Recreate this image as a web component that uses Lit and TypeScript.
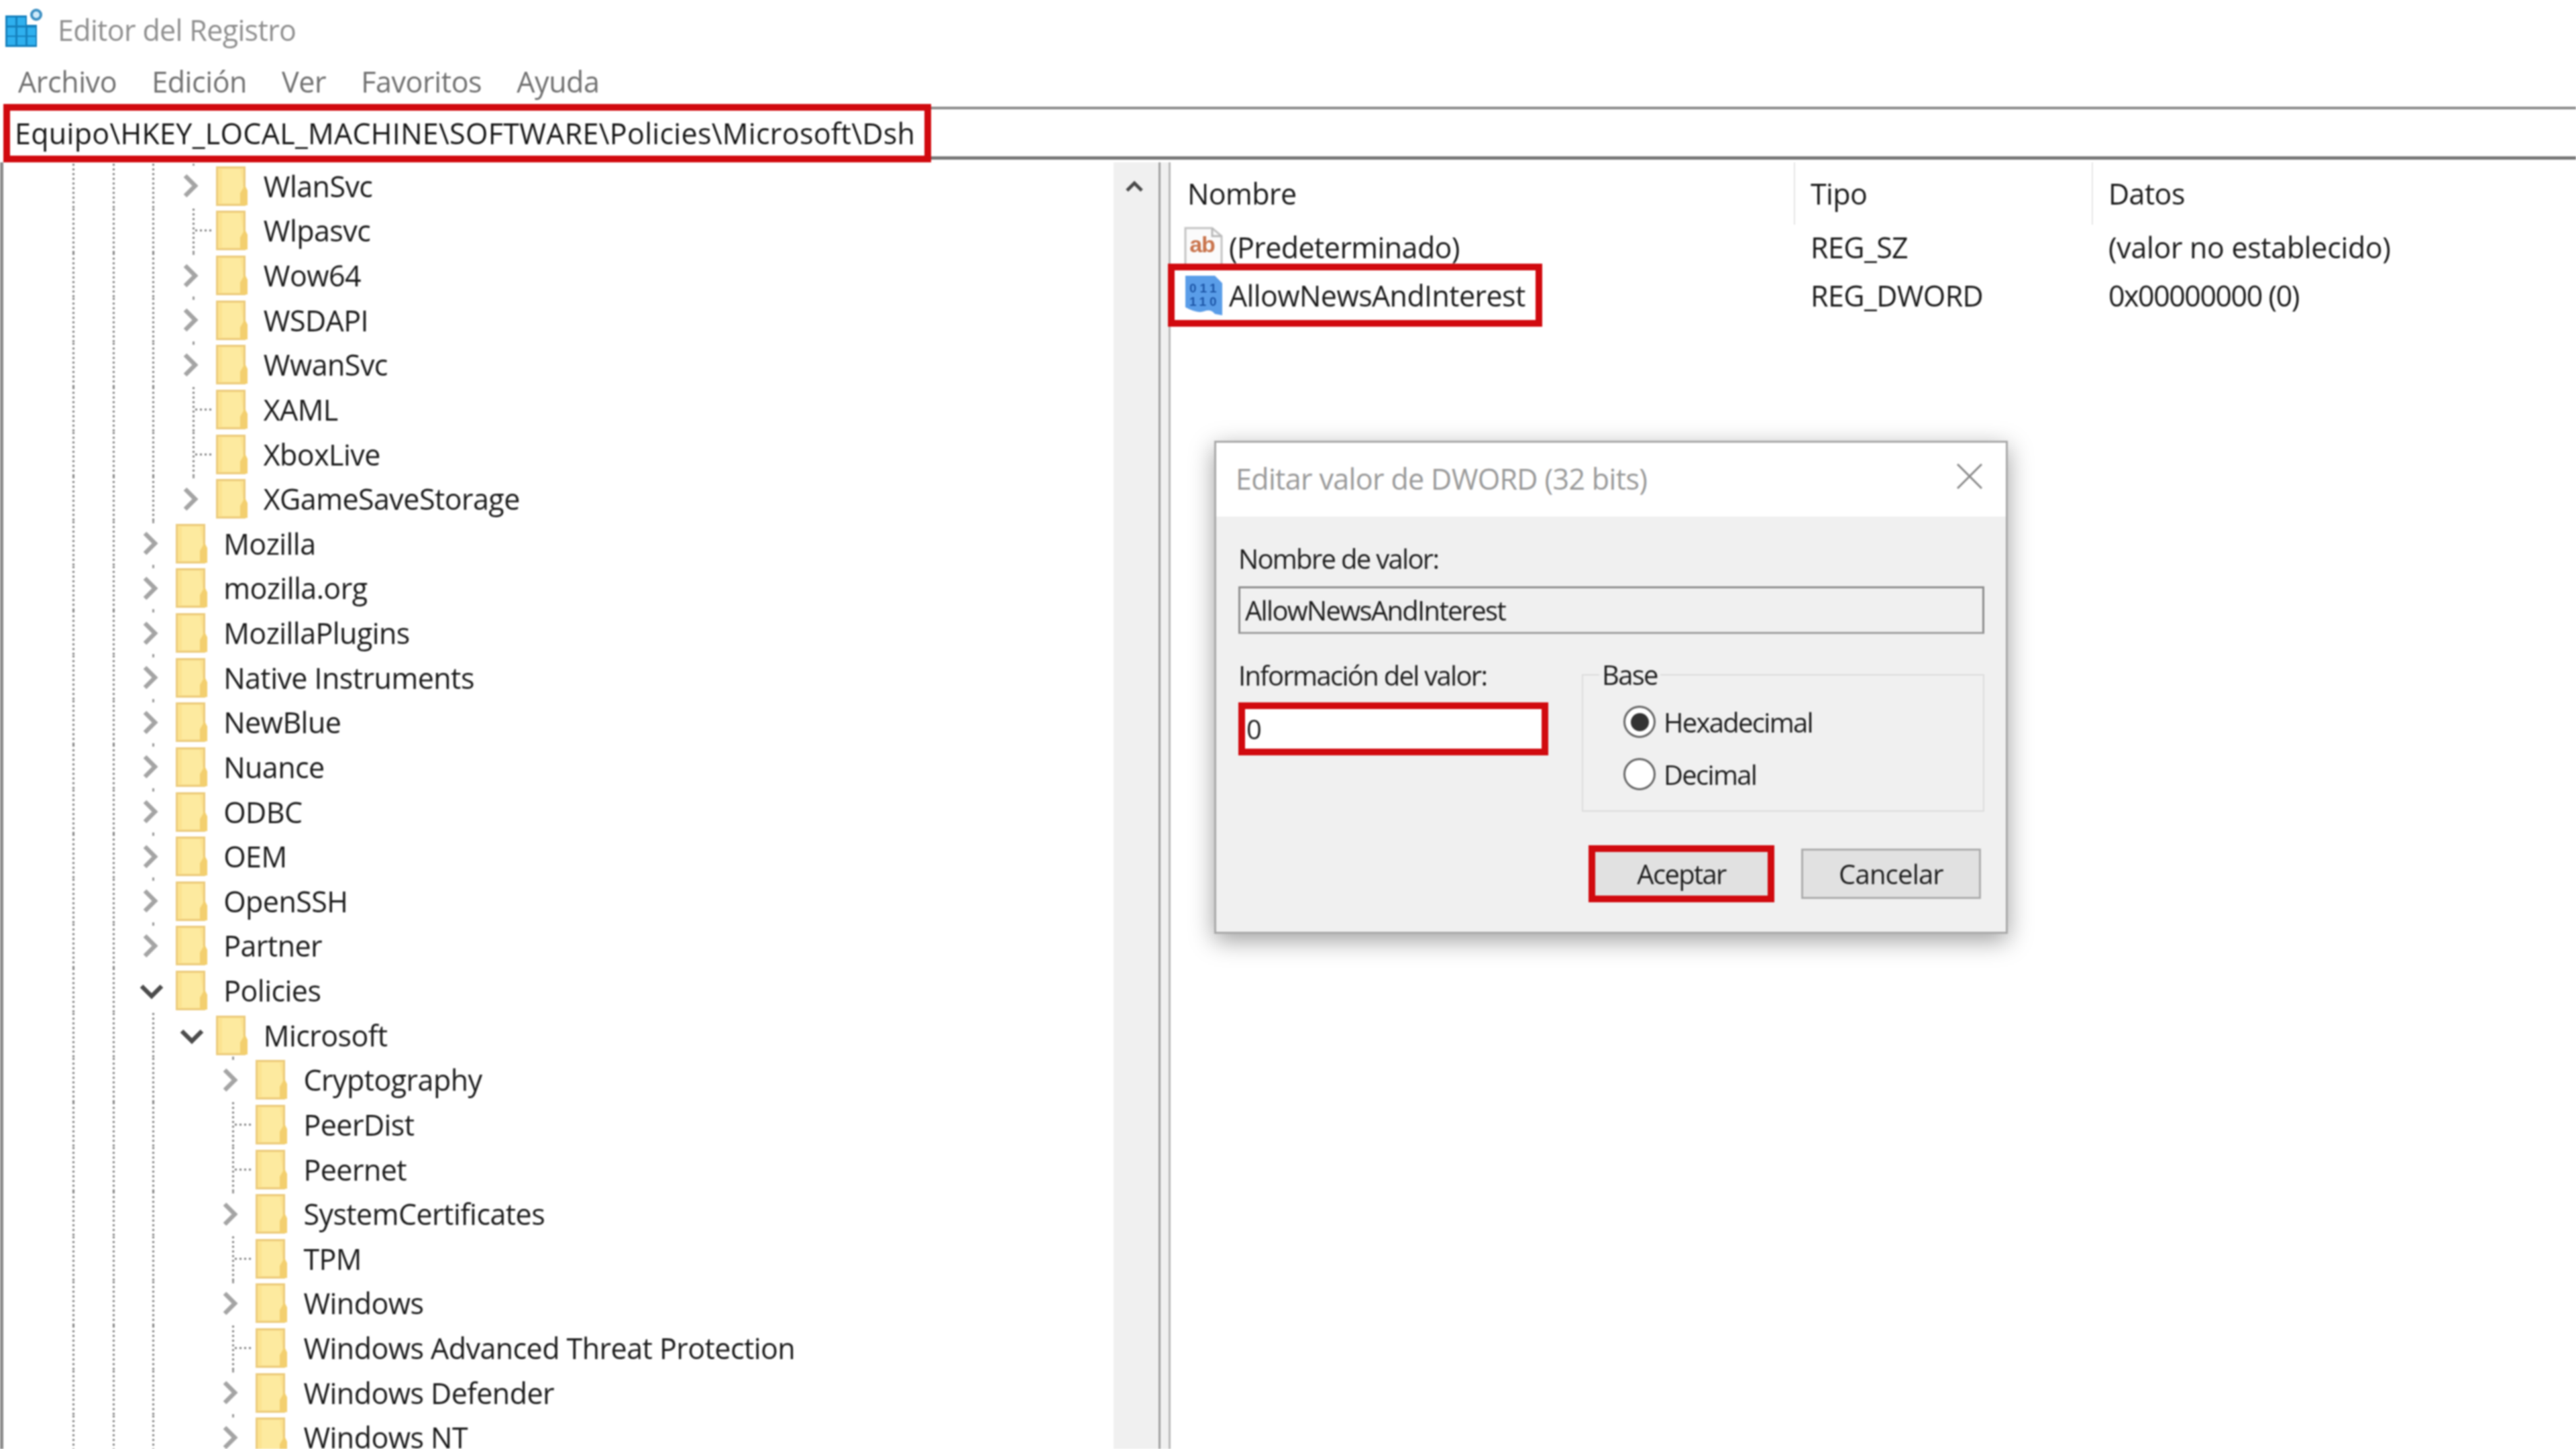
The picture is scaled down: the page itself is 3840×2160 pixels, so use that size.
import { LitElement, html, css, svg } from "lit";
import { customElement } from "lit/decorators.js";

type Row = { name: string; guides: number[]; kind: "closed" | "open" | "leaf" };

const L3 = [1, 1, 1];
const L2 = [1, 1];
const L4 = [1, 1, 1, 0];
const rows: Row[] = [
  ...[["WlanSvc", "closed"], ["Wlpasvc", "leaf"], ["Wow64", "closed"], ["WSDAPI", "closed"], ["WwanSvc", "closed"], ["XAML", "leaf"], ["XboxLive", "leaf"], ["XGameSaveStorage", "closed"]].map(([name, kind]) => ({ name, kind, guides: L3 } as Row)),
  ...["Mozilla", "mozilla.org", "MozillaPlugins", "Native Instruments", "NewBlue", "Nuance", "ODBC", "OEM", "OpenSSH", "Partner"].map((name) => ({ name, kind: "closed", guides: L2 } as Row)),
  { name: "Policies", kind: "open", guides: L2 },
  { name: "Microsoft", kind: "open", guides: L3 },
  ...[["Cryptography", "closed"], ["PeerDist", "leaf"], ["Peernet", "leaf"], ["SystemCertificates", "closed"], ["TPM", "leaf"], ["Windows", "closed"], ["Windows Advanced Threat Protection", "leaf"], ["Windows Defender", "closed"], ["Windows NT", "closed"]].map(([name, kind]) => ({ name, kind, guides: L4 } as Row)),
];

const folder = html`<svg class="folder" viewBox="0 0 48 59" aria-hidden="true">
  <rect x="1.5" y="1.5" width="41" height="56" fill="#fce391" stroke="#eccb7c" stroke-width="3"/>
  <path d="M9 4 L36 4 L41 34 L41 55 L9 55 Z" fill="#fdea9f"/>
  <path d="M36 40 L43 28 L47 36 L47 58 L36 58 Z" fill="#f3cf6f"/>
</svg>`;

const chevClosed = html`<svg class="chev" viewBox="0 0 24 36" aria-hidden="true"><path d="M4 3 L19 18 L4 33" fill="none" stroke="#a4a4a4" stroke-width="6.5"/></svg>`;
const chevOpen = html`<svg class="chev open" viewBox="0 0 36 24" aria-hidden="true"><path d="M3 4 L18 19 L33 4" fill="none" stroke="#4c4c4c" stroke-width="6.5"/></svg>`;

const regIcon = html`<svg class="appicon" viewBox="0 0 56 60" aria-hidden="true">
  <path d="M0 12 H32 V26 H47 V59 H0 Z" fill="#1580bd"/>
  ${[[3, 15], [18, 15], [3, 30], [18, 30], [33, 30], [3, 44], [18, 44], [33, 44]].map(([x, y]) => svg`<rect x=${x} y=${y} width="12" height="12" fill="#2fb0ee"/>`)}
  <circle cx="46" cy="11" r="7" fill="#cfeafa" stroke="#3a8ec2" stroke-width="4"/>
</svg>`;

const abIcon = html`<svg class="valicon" viewBox="0 0 58 60" aria-hidden="true">
  <path d="M2 2 H42 L56 14 V58 H2 Z" fill="#fbfbfb" stroke="#c4c4c4" stroke-width="3"/>
  <path d="M42 2 V14 H56" fill="none" stroke="#b8b8b8" stroke-width="3"/>
  <text x="27" y="38" text-anchor="middle" class="abt">ab</text>
</svg>`;
const dwIcon = html`<svg class="valicon" viewBox="0 0 58 60" aria-hidden="true">
  <path d="M2 1 H46 L57 12 V60 L46 58 Q40 50 30 54 T2 48 Z" fill="#5a9de8"/>
  <text x="8" y="26" textLength="40" class="dwt">011</text>
  <text x="8" y="46" textLength="40" class="dwt">110</text>
</svg>`;

@customElement("app-root")
export class AppRoot extends LitElement {
  static styles = css`
    :host { display: block; width: 3840px; height: 2160px; overflow: hidden; background: #fff; position: relative; font-family: "Open Sans", "Noto Sans", sans-serif; color: #222; }
    .win { width: 3840px; height: 2160px; display: flex; flex-direction: column; filter: blur(1.1px); position: relative; }
    .title { height: 88px; display: flex; align-items: center; padding-left: 8px; gap: 22px; color: #8f8f8f; font-size: 43px; letter-spacing: -0.65px; flex: none; }
    .appicon { width: 56px; height: 60px; margin-top: -6px; }
    .menu { height: 66px; display: flex; align-items: center; padding-left: 27px; gap: 52px; color: #707070; font-size: 43px; letter-spacing: -0.4px; flex: none; }
    .addr { height: 87px; display: flex; flex: none; padding-left: 5px; margin-top: 1px; }
    .path { width: 1383px; box-sizing: border-box; border: 10px solid #d10a0f; display: flex; align-items: center; padding-left: 7px; font-size: 43px; letter-spacing: 0.3px; white-space: nowrap; color: #151515; }
    .rest { flex: 1; margin-top: 4px; margin-bottom: 4px; border-top: 4px solid #8d8d8d; border-bottom: 5px solid #777; }
    .panes { flex: 1; min-height: 0; display: flex; border-left: 5px solid #8c8c8c; box-sizing: border-box; }
    .tree { width: 1655px; flex: none; overflow: hidden; padding-left: 103px; box-sizing: border-box; margin-top: 2px; }
    .row { height: 66.63px; display: flex; align-items: center; font-size: 43px; letter-spacing: -0.55px; white-space: nowrap; color: #1a1a1a; }
    .g { width: 59.6px; height: 100%; flex: none; }
    .g.on, .node.leaf { background: repeating-linear-gradient(#868686 0 3px, transparent 3px 7px) left top / 3px 100% no-repeat; }
    .node { width: 35px; height: 100%; flex: none; display: flex; align-items: center; position: relative; }
    .node.leaf::after { content: ""; width: 24px; height: 3px; margin-left: 4px; background: repeating-linear-gradient(90deg, #868686 0 3px, transparent 3px 7px); }
    .node.closed::before { content: ""; position: absolute; left: 0; top: -2px; width: 3px; height: 5px; background: #9a9a9a; }
    .chev { width: 24px; height: 36px; margin-left: -15px; flex: none; }
    .chev.open { width: 36px; height: 24px; margin-left: -19px; margin-top: 3px; }
    .folder { width: 48px; height: 59px; flex: none; }
    .label { margin-left: 23px; }
    .scroll { width: 67px; flex: none; background: #f0f0f0; display: flex; justify-content: center; padding: 26px 6px 0 0; box-sizing: border-box; }
    .scroll svg { width: 28px; height: 20px; }
    .split { width: 18px; flex: none; box-sizing: border-box; background: #f0f0f0; border-left: 3px solid #a0a0a0; border-right: 3px solid #b8b8b8; }
    .list { flex: 1; min-width: 0; font-size: 43px; letter-spacing: -0.6px; color: #1a1a1a; }
    .lh, .lr { display: grid; grid-template-columns: 929px 444px 1fr; }
    .lh { height: 90px; }
    .lh > div { display: flex; align-items: center; padding-left: 25px; margin-bottom: -3px; }
    .lh > div + div { border-left: 2px solid #e6e6e6; box-sizing: border-box; padding-left: 23px; }
    .lr { height: 72px; align-items: center; }
    .lr > div + div { padding-left: 25px; }
    .lr > .hexv { letter-spacing: -1.5px; }
    .lr > .wide { letter-spacing: -0.35px; }
    .nm { display: flex; align-items: center; padding-left: 20px; gap: 9px; }
    .valicon { width: 58px; height: 60px; flex: none; }
    .abt { font: 700 34px "Liberation Sans", sans-serif; fill: #c9744c; letter-spacing: -1px; }
    .dwt { font: 700 19px "Liberation Sans", sans-serif; fill: #1e57a8; }
    .hl { position: relative; display: flex; align-items: center; gap: 9px; }
    .hl::after { content: ""; position: absolute; left: -24px; right: -25px; top: -17px; bottom: -17px; border: 10px solid #d10a0f; box-sizing: border-box; }
    .dialog { position: absolute; left: 1810px; top: 657px; width: 1183px; height: 735px; box-sizing: border-box; background: #f0f0f0; border: 3px solid #a9a9a9; box-shadow: 0 10px 34px rgba(0, 0, 0, 0.38); display: flex; flex-direction: column; font-size: 40px; letter-spacing: -1.7px; color: #1d1d1d; }
    .dt { height: 110px; flex: none; background: #fff; display: flex; align-items: center; justify-content: space-between; padding: 0 34px 0 29px; color: #9a9a9a; font-size: 43px; letter-spacing: -0.65px; }
    .dt span { margin-top: -4px; }
    .dt svg { width: 40px; height: 40px; margin-top: -10px; }
    .db { padding: 37px 34px 0 33px; display: flex; flex-direction: column; }
    .lbl { height: 50px; display: flex; align-items: center; }
    .ipt { margin-top: 17px; height: 71px; box-sizing: border-box; border: 3px solid #8e8e8e; border-bottom-color: #a0a0a0; display: flex; align-items: center; padding-left: 7px; background: #f0f0f0; margin-right: -2px; }
    .cols { margin-top: 36px; display: grid; grid-template-columns: 462px 1fr; column-gap: 50px; align-items: start; }
    .ipt2 { margin-top: 16px; height: 79px; box-sizing: border-box; border: 10px solid #d10a0f; background: #fff; display: flex; align-items: center; padding-left: 2px; }
    fieldset { margin: 0 -2px 0 0; border: 2px solid #dcdcdc; padding: 6px 0 0 60px; height: 229px; box-sizing: border-box; min-width: 0; }
    legend { margin-left: -36px; padding: 0 4px; height: 50px; line-height: 50px; }
    .radio { height: 78px; display: flex; align-items: center; gap: 13px; }
    .radio span:last-child { margin-left: -1px; }
    .dot { width: 48px; height: 48px; border-radius: 50%; border: 3px solid #666; box-sizing: border-box; background: #fff; display: flex; align-items: center; justify-content: center; }
    .dot.on::after { content: ""; width: 27px; height: 27px; border-radius: 50%; background: #333; }
    .btns { margin-top: 50px; display: flex; justify-content: flex-end; align-items: center; gap: 40px; padding-right: 3px; }
    .btn { display: flex; align-items: center; justify-content: center; box-sizing: border-box; background: #e1e1e1; }
    .ok { width: 277px; height: 85px; border: 10px solid #d10a0f; }
    .cancel { width: 268px; height: 75px; border: 3px solid #adadad; letter-spacing: -0.8px; }
  `;

  render() {
    return html`<div class="win">
      <div class="title">${regIcon}<span>Editor del Registro</span></div>
      <div class="menu"><span>Archivo</span><span>Edición</span><span>Ver</span><span>Favoritos</span><span>Ayuda</span></div>
      <div class="addr">
        <div class="path">Equipo\\HKEY_LOCAL_MACHINE\\SOFTWARE\\Policies\\Microsoft\\Dsh</div>
        <div class="rest"></div>
      </div>
      <div class="panes">
        <div class="tree">
          ${rows.map((r) => html`<div class="row">
            ${r.guides.map((g) => html`<span class="g ${g ? "on" : ""}"></span>`)}
            <span class="node ${r.kind}">${r.kind === "closed" ? chevClosed : r.kind === "open" ? chevOpen : ""}</span>
            ${folder}<span class="label">${r.name}</span>
          </div>`)}
        </div>
        <div class="scroll"><svg viewBox="0 0 28 20" aria-hidden="true"><path d="M3 16 L14 5 L25 16" fill="none" stroke="#4a4a4a" stroke-width="5"/></svg></div>
        <div class="split"></div>
        <div class="list">
          <div class="lh"><div>Nombre</div><div>Tipo</div><div>Datos</div></div>
          <div class="lr"><div class="nm">${abIcon}<span>(Predeterminado)</span></div><div>REG_SZ</div><div class="wide">(valor no establecido)</div></div>
          <div class="lr"><div class="nm"><div class="hl">${dwIcon}<span>AllowNewsAndInterest</span></div></div><div>REG_DWORD</div><div class="hexv">0x00000000 (0)</div></div>
        </div>
      </div>
      <div class="dialog">
        <div class="dt"><span>Editar valor de DWORD (32 bits)</span><svg viewBox="0 0 40 40" aria-hidden="true"><path d="M2 2 L38 38 M38 2 L2 38" stroke="#8a8a8a" stroke-width="3" fill="none"/></svg></div>
        <div class="db">
          <div class="lbl">Nombre de valor:</div>
          <div class="ipt">AllowNewsAndInterest</div>
          <div class="cols">
            <div>
              <div class="lbl">Información del valor:</div>
              <div class="ipt2">0</div>
            </div>
            <fieldset>
              <legend>Base</legend>
              <div class="radio"><span class="dot on"></span><span>Hexadecimal</span></div>
              <div class="radio"><span class="dot"></span><span>Decimal</span></div>
            </fieldset>
          </div>
          <div class="btns"><div class="btn ok">Aceptar</div><div class="btn cancel">Cancelar</div></div>
        </div>
      </div>
    </div>`;
  }
}
